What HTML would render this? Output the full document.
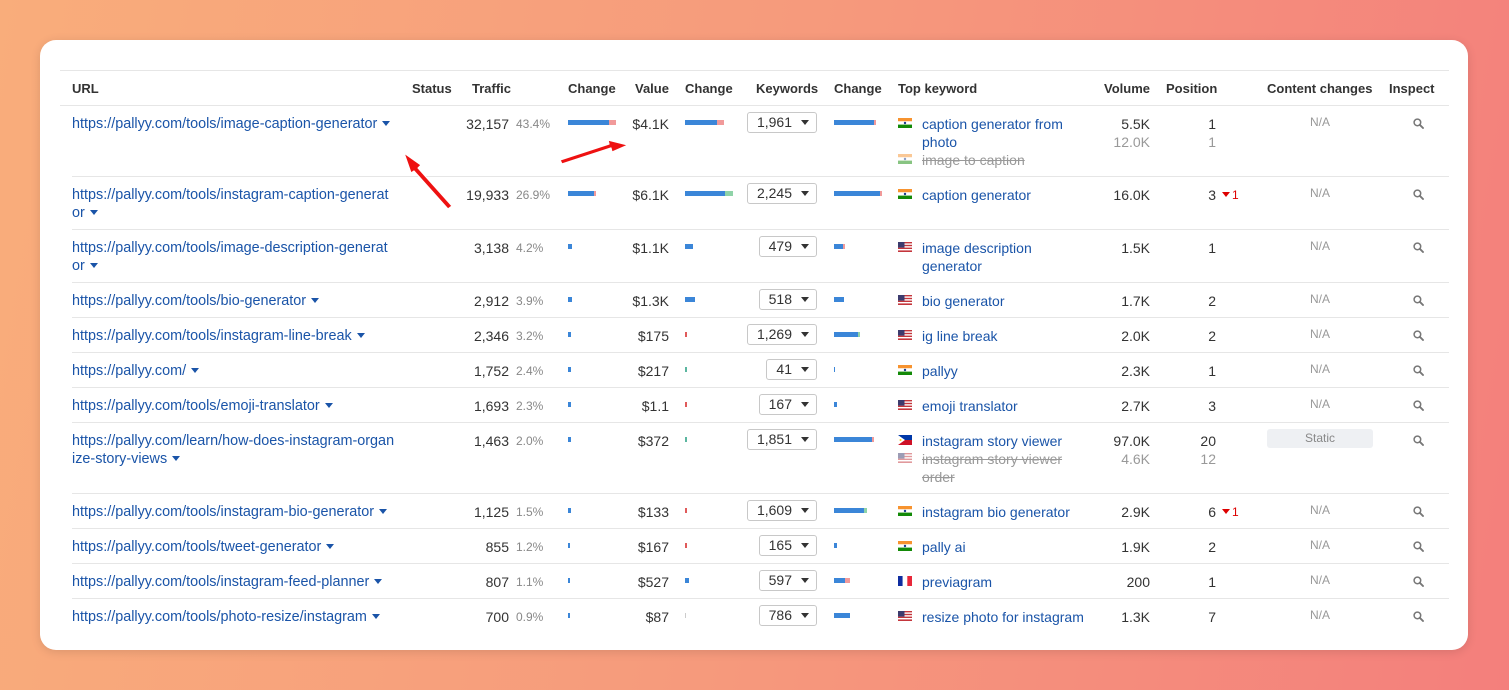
<!DOCTYPE html>
<html><head><meta charset="utf-8"><style>
*{margin:0;padding:0;box-sizing:border-box}
body{width:1509px;height:690px;overflow:hidden;background:linear-gradient(100deg,#f9ad7b 0%,#f69a7c 50%,#f47f7c 100%);font-family:"Liberation Sans",Arial,sans-serif;font-size:14px;color:#333;position:relative}
.card{position:absolute;left:40px;top:40px;width:1428px;height:610px;background:#fff;border-radius:16px;box-shadow:0 2px 10px rgba(0,0,0,.12)}
.a{position:absolute;white-space:nowrap;line-height:18px}
.h{font-weight:bold;color:#333;top:80px;font-size:13px}
.r{position:absolute;left:0;width:1509px}
.line{position:absolute;height:1px;background:#e6e6e6}
.u{color:#1a54a8;left:72px;font-size:14.4px}
.car{display:inline-block;width:0;height:0;border-left:4px solid transparent;border-right:4px solid transparent;border-top:5px solid #1a54a8;margin-left:5px;vertical-align:2px}
.pct{color:#888;font-size:12px;left:516px}
.bar{position:absolute;height:5px;display:flex}
.bar i{display:block;height:5px}
.b{background:#3b86d8}.rd{background:#f19a9a}.g{background:#8fd3a8}.rr{background:#e05a5a}
.dd{position:absolute;right:692px;height:21px;border:1px solid #c8c8c8;border-radius:3px;padding:0 7px 0 9px;line-height:19px;font-size:14px;color:#333}
.dd:after{content:"";display:inline-block;border-left:4px solid transparent;border-right:4px solid transparent;border-top:5px solid #333;margin-left:9px;vertical-align:2px}
.kw{color:#1a54a8;left:922px}
.st{color:#999;text-decoration:line-through}
.fl{position:absolute;left:898px;width:14px;height:10px}
.na{color:#999;font-size:12px;left:1300px;width:40px;text-align:center}
.dn{color:#d00;font-size:12px}
.dn:before{content:"";display:inline-block;border-left:4px solid transparent;border-right:4px solid transparent;border-top:5px solid #d00;margin-right:2px;vertical-align:2px}
.mg{position:absolute;left:1413px;width:11px;height:11px}
</style></head><body>
<div class="card"></div>
<svg width="0" height="0" style="position:absolute"><defs>
<symbol id="in" viewBox="0 0 14 10"><rect width="14" height="3.4" fill="#f7932f"/><rect y="3.3" width="14" height="3.4" fill="#fff"/><rect y="6.6" width="14" height="3.4" fill="#138a08"/><circle cx="7" cy="5" r="1.2" fill="#1c3d8f"/></symbol>
<symbol id="us" viewBox="0 0 14 10"><rect width="14" height="10" fill="#fff"/><rect y="0" width="14" height="1.4" fill="#c4363c"/><rect y="2.8" width="14" height="1.4" fill="#c4363c"/><rect y="5.6" width="14" height="1.4" fill="#c4363c"/><rect y="8.4" width="14" height="1.6" fill="#c4363c"/><rect width="6.5" height="5.6" fill="#3c3b6e"/></symbol>
<symbol id="ph" viewBox="0 0 14 10"><rect width="14" height="5" fill="#0038a8"/><rect y="5" width="14" height="5" fill="#ce1126"/><polygon points="0,0 7,5 0,10" fill="#fff"/><circle cx="2.5" cy="5" r="1" fill="#fcd116"/></symbol>
<symbol id="fr" viewBox="0 0 14 10"><rect width="4.7" height="10" fill="#0f2da0"/><rect x="4.7" width="4.7" height="10" fill="#fff"/><rect x="9.3" width="4.7" height="10" fill="#e8283a"/></symbol>
<symbol id="mg" viewBox="0 0 11 11"><circle cx="4.4" cy="4.4" r="3.3" fill="none" stroke="#777" stroke-width="1.5"/><line x1="6.8" y1="6.8" x2="10" y2="10" stroke="#777" stroke-width="1.9" stroke-linecap="round"/></symbol>
</defs></svg>

<div class="line" style="left:60px;top:70px;width:1389px"></div>
<div class="line" style="left:60px;top:105px;width:1389px"></div>
<div class="a h" style="left:72px">URL</div>
<div class="a h" style="left:412px">Status</div>
<div class="a h" style="left:472px">Traffic</div>
<div class="a h" style="left:568px">Change</div>
<div class="a h" style="left:635px">Value</div>
<div class="a h" style="left:685px">Change</div>
<div class="a h" style="left:756px">Keywords</div>
<div class="a h" style="left:834px">Change</div>
<div class="a h" style="left:898px">Top keyword</div>
<div class="a h" style="left:1104px">Volume</div>
<div class="a h" style="left:1166px">Position</div>
<div class="a h" style="left:1267px">Content changes</div>
<div class="a h" style="left:1389px">Inspect</div>

<!-- row 1 -->
<div class="r" style="top:105px">
<div class="a u" style="top:10px">https://pallyy.com/tools/image-caption-generator<span class="car"></span></div>
<div class="a" style="right:1000px;top:10px">32,157</div><div class="a pct" style="top:10px">43.4%</div>
<div class="bar" style="left:568px;top:15px"><i class="b" style="width:41px"></i><i class="rd" style="width:7px"></i></div>
<div class="a" style="right:840px;top:10px">$4.1K</div>
<div class="bar" style="left:685px;top:15px"><i class="b" style="width:32px"></i><i class="rd" style="width:7px"></i></div>
<div class="dd" style="top:7px">1,961</div>
<div class="bar" style="left:834px;top:15px"><i class="b" style="width:40px"></i><i class="rd" style="width:2px"></i></div>
<svg class="fl" style="top:13px"><use href="#in"/></svg>
<div class="a kw" style="top:10px">caption generator from<br>photo</div>
<svg class="fl" style="top:49px;opacity:.5"><use href="#in"/></svg>
<div class="a kw st" style="top:46px">image to caption</div>
<div class="a" style="right:359px;top:10px">5.5K</div><div class="a" style="right:359px;top:28px;color:#999">12.0K</div>
<div class="a" style="right:293px;top:10px">1</div><div class="a" style="right:293px;top:28px;color:#999">1</div>
<div class="a na" style="top:8px">N/A</div>
<svg class="mg" style="top:13px"><use href="#mg"/></svg>
<div class="line" style="left:72px;top:71px;width:1377px"></div>
</div>

<!-- row 2 -->
<div class="r" style="top:176px">
<div class="a u" style="top:10px">https://pallyy.com/tools/instagram-caption-generat<br>or<span class="car"></span></div>
<div class="a" style="right:1000px;top:10px">19,933</div><div class="a pct" style="top:10px">26.9%</div>
<div class="bar" style="left:568px;top:15px"><i class="b" style="width:26px"></i><i class="rd" style="width:2px"></i></div>
<div class="a" style="right:840px;top:10px">$6.1K</div>
<div class="bar" style="left:685px;top:15px"><i class="b" style="width:40px"></i><i class="g" style="width:8px"></i></div>
<div class="dd" style="top:7px">2,245</div>
<div class="bar" style="left:834px;top:15px"><i class="b" style="width:46px"></i><i class="rd" style="width:2px"></i></div>
<svg class="fl" style="top:13px"><use href="#in"/></svg>
<div class="a kw" style="top:10px">caption generator</div>
<div class="a" style="right:359px;top:10px">16.0K</div>
<div class="a" style="right:293px;top:10px">3</div><div class="a dn" style="left:1222px;top:10px">1</div>
<div class="a na" style="top:8px">N/A</div>
<svg class="mg" style="top:13px"><use href="#mg"/></svg>
<div class="line" style="left:72px;top:53px;width:1377px"></div>
</div>

<!-- row 3 -->
<div class="r" style="top:229px">
<div class="a u" style="top:10px">https://pallyy.com/tools/image-description-generat<br>or<span class="car"></span></div>
<div class="a" style="right:1000px;top:10px">3,138</div><div class="a pct" style="top:10px">4.2%</div>
<div class="bar" style="left:568px;top:15px"><i class="b" style="width:4px"></i></div>
<div class="a" style="right:840px;top:10px">$1.1K</div>
<div class="bar" style="left:685px;top:15px"><i class="b" style="width:8px"></i></div>
<div class="dd" style="top:7px">479</div>
<div class="bar" style="left:834px;top:15px"><i class="b" style="width:9px"></i><i class="rd" style="width:2px"></i></div>
<svg class="fl" style="top:13px"><use href="#us"/></svg>
<div class="a kw" style="top:10px">image description<br>generator</div>
<div class="a" style="right:359px;top:10px">1.5K</div>
<div class="a" style="right:293px;top:10px">1</div>
<div class="a na" style="top:8px">N/A</div>
<svg class="mg" style="top:13px"><use href="#mg"/></svg>
<div class="line" style="left:72px;top:53px;width:1377px"></div>
</div>

<!-- row 4 -->
<div class="r" style="top:282px">
<div class="a u" style="top:10px">https://pallyy.com/tools/bio-generator<span class="car"></span></div>
<div class="a" style="right:1000px;top:10px">2,912</div><div class="a pct" style="top:10px">3.9%</div>
<div class="bar" style="left:568px;top:15px"><i class="b" style="width:4px"></i></div>
<div class="a" style="right:840px;top:10px">$1.3K</div>
<div class="bar" style="left:685px;top:15px"><i class="b" style="width:10px"></i></div>
<div class="dd" style="top:7px">518</div>
<div class="bar" style="left:834px;top:15px"><i class="b" style="width:10px"></i></div>
<svg class="fl" style="top:13px"><use href="#us"/></svg>
<div class="a kw" style="top:10px">bio generator</div>
<div class="a" style="right:359px;top:10px">1.7K</div>
<div class="a" style="right:293px;top:10px">2</div>
<div class="a na" style="top:8px">N/A</div>
<svg class="mg" style="top:13px"><use href="#mg"/></svg>
<div class="line" style="left:72px;top:35px;width:1377px"></div>
</div>

<!-- row 5 -->
<div class="r" style="top:317px">
<div class="a u" style="top:10px">https://pallyy.com/tools/instagram-line-break<span class="car"></span></div>
<div class="a" style="right:1000px;top:10px">2,346</div><div class="a pct" style="top:10px">3.2%</div>
<div class="bar" style="left:568px;top:15px"><i class="b" style="width:3px"></i></div>
<div class="a" style="right:840px;top:10px">$175</div>
<div class="bar" style="left:685px;top:15px"><i class="rr" style="width:2px"></i></div>
<div class="dd" style="top:7px">1,269</div>
<div class="bar" style="left:834px;top:15px"><i class="b" style="width:24px"></i><i class="g" style="width:2px"></i></div>
<svg class="fl" style="top:13px"><use href="#us"/></svg>
<div class="a kw" style="top:10px">ig line break</div>
<div class="a" style="right:359px;top:10px">2.0K</div>
<div class="a" style="right:293px;top:10px">2</div>
<div class="a na" style="top:8px">N/A</div>
<svg class="mg" style="top:13px"><use href="#mg"/></svg>
<div class="line" style="left:72px;top:35px;width:1377px"></div>
</div>

<!-- row 6 -->
<div class="r" style="top:352px">
<div class="a u" style="top:10px">https://pallyy.com/<span class="car"></span></div>
<div class="a" style="right:1000px;top:10px">1,752</div><div class="a pct" style="top:10px">2.4%</div>
<div class="bar" style="left:568px;top:15px"><i class="b" style="width:3px"></i></div>
<div class="a" style="right:840px;top:10px">$217</div>
<div class="bar" style="left:685px;top:15px"><i style="width:2px;background:#5bb6a0"></i></div>
<div class="dd" style="top:7px">41</div>
<div class="bar" style="left:834px;top:15px"><i class="b" style="width:1px"></i></div>
<svg class="fl" style="top:13px"><use href="#in"/></svg>
<div class="a kw" style="top:10px">pallyy</div>
<div class="a" style="right:359px;top:10px">2.3K</div>
<div class="a" style="right:293px;top:10px">1</div>
<div class="a na" style="top:8px">N/A</div>
<svg class="mg" style="top:13px"><use href="#mg"/></svg>
<div class="line" style="left:72px;top:35px;width:1377px"></div>
</div>

<!-- row 7 -->
<div class="r" style="top:387px">
<div class="a u" style="top:10px">https://pallyy.com/tools/emoji-translator<span class="car"></span></div>
<div class="a" style="right:1000px;top:10px">1,693</div><div class="a pct" style="top:10px">2.3%</div>
<div class="bar" style="left:568px;top:15px"><i class="b" style="width:3px"></i></div>
<div class="a" style="right:840px;top:10px">$1.1</div>
<div class="bar" style="left:685px;top:15px"><i class="rr" style="width:2px"></i></div>
<div class="dd" style="top:7px">167</div>
<div class="bar" style="left:834px;top:15px"><i class="b" style="width:3px"></i></div>
<svg class="fl" style="top:13px"><use href="#us"/></svg>
<div class="a kw" style="top:10px">emoji translator</div>
<div class="a" style="right:359px;top:10px">2.7K</div>
<div class="a" style="right:293px;top:10px">3</div>
<div class="a na" style="top:8px">N/A</div>
<svg class="mg" style="top:13px"><use href="#mg"/></svg>
<div class="line" style="left:72px;top:35px;width:1377px"></div>
</div>

<!-- row 8 -->
<div class="r" style="top:422px">
<div class="a u" style="top:10px">https://pallyy.com/learn/how-does-instagram-organ<br>ize-story-views<span class="car"></span></div>
<div class="a" style="right:1000px;top:10px">1,463</div><div class="a pct" style="top:10px">2.0%</div>
<div class="bar" style="left:568px;top:15px"><i class="b" style="width:3px"></i></div>
<div class="a" style="right:840px;top:10px">$372</div>
<div class="bar" style="left:685px;top:15px"><i style="width:2px;background:#5bb6a0"></i></div>
<div class="dd" style="top:7px">1,851</div>
<div class="bar" style="left:834px;top:15px"><i class="b" style="width:38px"></i><i class="rd" style="width:2px"></i></div>
<svg class="fl" style="top:13px"><use href="#ph"/></svg>
<div class="a kw" style="top:10px">instagram story viewer</div>
<svg class="fl" style="top:31px;opacity:.5"><use href="#us"/></svg>
<div class="a kw st" style="top:28px">instagram story viewer<br>order</div>
<div class="a" style="right:359px;top:10px">97.0K</div><div class="a" style="right:359px;top:28px;color:#999">4.6K</div>
<div class="a" style="right:293px;top:10px">20</div><div class="a" style="right:293px;top:28px;color:#999">12</div>
<div style="position:absolute;left:1267px;top:7px;width:106px;height:19px;background:#eef0f3;border-radius:3px;color:#888;font-size:12px;text-align:center;line-height:19px">Static</div>
<svg class="mg" style="top:13px"><use href="#mg"/></svg>
<div class="line" style="left:72px;top:71px;width:1377px"></div>
</div>

<!-- row 9 -->
<div class="r" style="top:493px">
<div class="a u" style="top:10px">https://pallyy.com/tools/instagram-bio-generator<span class="car"></span></div>
<div class="a" style="right:1000px;top:10px">1,125</div><div class="a pct" style="top:10px">1.5%</div>
<div class="bar" style="left:568px;top:15px"><i class="b" style="width:3px"></i></div>
<div class="a" style="right:840px;top:10px">$133</div>
<div class="bar" style="left:685px;top:15px"><i class="rr" style="width:2px"></i></div>
<div class="dd" style="top:7px">1,609</div>
<div class="bar" style="left:834px;top:15px"><i class="b" style="width:30px"></i><i class="g" style="width:3px"></i></div>
<svg class="fl" style="top:13px"><use href="#in"/></svg>
<div class="a kw" style="top:10px">instagram bio generator</div>
<div class="a" style="right:359px;top:10px">2.9K</div>
<div class="a" style="right:293px;top:10px">6</div><div class="a dn" style="left:1222px;top:10px">1</div>
<div class="a na" style="top:8px">N/A</div>
<svg class="mg" style="top:13px"><use href="#mg"/></svg>
<div class="line" style="left:72px;top:35px;width:1377px"></div>
</div>

<!-- row 10 -->
<div class="r" style="top:528px">
<div class="a u" style="top:10px">https://pallyy.com/tools/tweet-generator<span class="car"></span></div>
<div class="a" style="right:1000px;top:10px">855</div><div class="a pct" style="top:10px">1.2%</div>
<div class="bar" style="left:568px;top:15px"><i class="b" style="width:2px"></i></div>
<div class="a" style="right:840px;top:10px">$167</div>
<div class="bar" style="left:685px;top:15px"><i class="rr" style="width:2px"></i></div>
<div class="dd" style="top:7px">165</div>
<div class="bar" style="left:834px;top:15px"><i class="b" style="width:3px"></i></div>
<svg class="fl" style="top:13px"><use href="#in"/></svg>
<div class="a kw" style="top:10px">pally ai</div>
<div class="a" style="right:359px;top:10px">1.9K</div>
<div class="a" style="right:293px;top:10px">2</div>
<div class="a na" style="top:8px">N/A</div>
<svg class="mg" style="top:13px"><use href="#mg"/></svg>
<div class="line" style="left:72px;top:35px;width:1377px"></div>
</div>

<!-- row 11 -->
<div class="r" style="top:563px">
<div class="a u" style="top:10px">https://pallyy.com/tools/instagram-feed-planner<span class="car"></span></div>
<div class="a" style="right:1000px;top:10px">807</div><div class="a pct" style="top:10px">1.1%</div>
<div class="bar" style="left:568px;top:15px"><i class="b" style="width:2px"></i></div>
<div class="a" style="right:840px;top:10px">$527</div>
<div class="bar" style="left:685px;top:15px"><i class="b" style="width:4px"></i></div>
<div class="dd" style="top:7px">597</div>
<div class="bar" style="left:834px;top:15px"><i class="b" style="width:11px"></i><i class="rd" style="width:5px"></i></div>
<svg class="fl" style="top:13px"><use href="#fr"/></svg>
<div class="a kw" style="top:10px">previagram</div>
<div class="a" style="right:359px;top:10px">200</div>
<div class="a" style="right:293px;top:10px">1</div>
<div class="a na" style="top:8px">N/A</div>
<svg class="mg" style="top:13px"><use href="#mg"/></svg>
<div class="line" style="left:72px;top:35px;width:1377px"></div>
</div>

<!-- row 12 -->
<div class="r" style="top:598px">
<div class="a u" style="top:10px">https://pallyy.com/tools/photo-resize/instagram<span class="car"></span></div>
<div class="a" style="right:1000px;top:10px">700</div><div class="a pct" style="top:10px">0.9%</div>
<div class="bar" style="left:568px;top:15px"><i class="b" style="width:2px"></i></div>
<div class="a" style="right:840px;top:10px">$87</div>
<div class="bar" style="left:685px;top:15px"><i style="width:1px;background:#ccc"></i></div>
<div class="dd" style="top:7px">786</div>
<div class="bar" style="left:834px;top:15px"><i class="b" style="width:16px"></i></div>
<svg class="fl" style="top:13px"><use href="#us"/></svg>
<div class="a kw" style="top:10px">resize photo for instagram</div>
<div class="a" style="right:359px;top:10px">1.3K</div>
<div class="a" style="right:293px;top:10px">7</div>
<div class="a na" style="top:8px">N/A</div>
<svg class="mg" style="top:13px"><use href="#mg"/></svg>
</div>

<!-- arrows -->
<svg style="position:absolute;left:0;top:0" width="1509" height="690">
<g fill="#ee1111" stroke="#fff" stroke-width="1.2" stroke-linejoin="round">
<polygon points="452,206 418,168 421,165 404,153 411,173 414,171 448,209"/>
<polygon points="562,164 611,148 612,152 628,145 608,140 609,144 560,160"/>
</g>
</svg>
</body></html>
